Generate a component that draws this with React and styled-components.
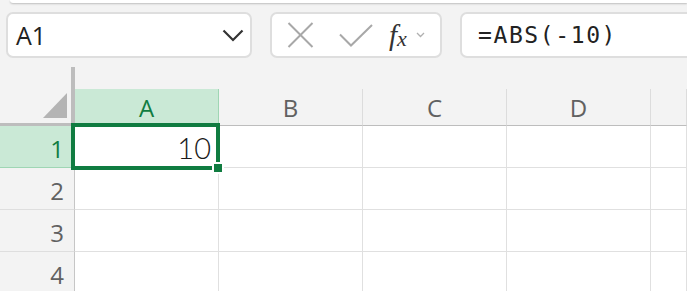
import React from 'react';
import styled, { createGlobalStyle } from 'styled-components';

const Global = createGlobalStyle`
  html, body { margin: 0; padding: 0; background: #f3f3f3; }
  body { font-family: "Open Sans", "Noto Sans", sans-serif; }
  * { box-sizing: border-box; }
`;

const Page = styled.div`
  width: 687px;
  height: 291px;
  overflow: hidden;
  background: #f3f3f3;
`;

const TopStrip = styled.div`
  height: 3px;
  margin-left: 10px;
  background: #fff;
  border-bottom-left-radius: 8px;
  box-shadow: 0 1px 2px rgba(0, 0, 0, 0.22);
`;

const Toolbar = styled.div`
  display: flex;
  gap: 18px;
  height: 55px;
  padding: 9px 0 0 6px;
`;

const Box = styled.div`
  flex-shrink: 0;
  height: 46px;
  background: #fff;
  border: 2px solid #dedede;
  border-radius: 7px;
  display: flex;
  align-items: center;
`;

const NameBox = styled(Box)`
  width: 246px;
  justify-content: space-between;
  padding: 0 6px 0 8px;
  font-size: 25px;
  color: #222;
`;

const FxBox = styled(Box)`
  width: 172px;
  padding-left: 15px;
`;

const FormulaBox = styled(Box)`
  width: 260px;
  padding-left: 16px;
  font-family: "DejaVu Sans Mono", monospace;
  font-size: 23px;
  letter-spacing: 1.6px;
  color: #222;
`;

const FxLabel = styled.span`
  font-family: "Liberation Serif", serif;
  font-style: italic;
  font-size: 29px;
  color: #333;
  margin-left: 16px;
  display: flex;
  align-items: flex-start;
  line-height: 1;
  sub {
    font-size: 22px;
    margin-left: 0;
    margin-top: 7px;
    vertical-align: baseline;
  }
`;

const IconGap = styled.span`
  display: flex;
  margin-left: ${p => p.$gap}px;
`;

const Sheet = styled.div`
  display: grid;
  grid-template-columns: 75px repeat(4, 144px) 1fr;
  grid-template-rows: 31px 37px repeat(4, 42px);
`;

const Corner = styled.div`
  grid-row: 1 / 3;
  padding-top: 9px;
  display: flex;
`;

const CornerBox = styled.div`
  flex: 1;
  border-right: 4px solid #bdbdbd;
  border-bottom: 3px solid #bdbdbd;
  display: flex;
  align-items: flex-end;
  justify-content: flex-end;
  padding: 0 4px 5px 0;
`;

const HeaderGap = styled.div`
  grid-column: 2 / -1;
`;

const ColHeader = styled.div`
  grid-row: 2;
  display: flex;
  align-items: center;
  justify-content: center;
  font-size: 24px;
  padding-top: 1px;
  color: ${p => (p.$active ? '#107c41' : '#616161')};
  background: ${p => (p.$active ? '#cae9d6' : '#f3f3f3')};
  border-right: 1px solid ${p => (p.$active ? '#9fd6b4' : '#dcdcdc')};
  border-bottom: 1px solid #bdbdbd;
`;

const RowHeader = styled.div`
  display: flex;
  align-items: center;
  justify-content: flex-end;
  padding: 3px 10px 0 0;
  font-size: 24px;
  color: ${p => (p.$active ? '#107c41' : '#616161')};
  background: ${p => (p.$active ? '#cae9d6' : '#f3f3f3')};
  border-right: 1px solid #c6c6c6;
  border-bottom: 1px solid ${p => (p.$active ? '#9fd6b4' : '#dedede')};
`;

const Cell = styled.div`
  position: relative;
  background: #fff;
  border-right: 1px solid #e0e0e0;
  border-bottom: 1px solid #e0e0e0;
  display: flex;
  align-items: center;
  justify-content: flex-end;
  padding: 2px 7px 0 0;
  font-family: "Lato", "Open Sans", sans-serif;
  font-weight: 300;
  font-size: 29px;
  color: #1a1a1a;
`;

const Selection = styled.div`
  position: absolute;
  z-index: 2;
  top: -3px;
  left: -4px;
  right: -2px;
  bottom: -3px;
  border: 4px solid #107c41;
  pointer-events: none;
`;

const FillHandle = styled.div`
  position: absolute;
  z-index: 3;
  right: -6px;
  bottom: -7px;
  width: 12px;
  height: 12px;
  background: #107c41;
  border: 2px solid #fff;
`;

const columns = ['A', 'B', 'C', 'D', ''];
const rows = [1, 2, 3, 4];

export default function App() {
  return (
    <Page>
      <Global />
      <TopStrip />
      <Toolbar>
        <NameBox>
          <span>A1</span>
          <svg width="22" height="13" viewBox="0 0 22 13">
            <polyline points="1.5,1.5 11,11 20.5,1.5" fill="none" stroke="#333" strokeWidth="2.2" />
          </svg>
        </NameBox>
        <FxBox>
          <svg width="27" height="26" viewBox="0 0 27 26">
            <line x1="1.5" y1="1" x2="25.5" y2="25" stroke="#a8a8a8" strokeWidth="2" />
            <line x1="25.5" y1="1" x2="1.5" y2="25" stroke="#a8a8a8" strokeWidth="2" />
          </svg>
          <IconGap $gap={25}>
            <svg width="34" height="23" viewBox="0 0 34 23">
              <polyline points="1,10.5 12,21.5 33,1" fill="none" stroke="#a8a8a8" strokeWidth="2" />
            </svg>
          </IconGap>
          <FxLabel>
            f<sub>x</sub>
          </FxLabel>
          <IconGap $gap={9}>
            <svg width="9" height="6" viewBox="0 0 9 6">
              <polyline points="1,1 4.5,4.5 8,1" fill="none" stroke="#b0b0b0" strokeWidth="1.3" />
            </svg>
          </IconGap>
        </FxBox>
        <FormulaBox>=ABS(-10)</FormulaBox>
      </Toolbar>
      <Sheet>
        <Corner>
          <CornerBox>
            <svg width="24" height="25" viewBox="0 0 24 25">
              <polygon points="0,25 24,25 24,0" fill="#b4b4b4" />
            </svg>
          </CornerBox>
        </Corner>
        <HeaderGap />
        {columns.map((c, i) => (
          <ColHeader key={i} $active={c === 'A'}>
            {c}
          </ColHeader>
        ))}
        {rows.map(r => (
          <React.Fragment key={r}>
            <RowHeader $active={r === 1}>{r}</RowHeader>
            {columns.map((c, i) => (
              <Cell key={i}>
                {r === 1 && c === 'A' && (
                  <>
                    10
                    <Selection />
                    <FillHandle />
                  </>
                )}
              </Cell>
            ))}
          </React.Fragment>
        ))}
      </Sheet>
    </Page>
  );
}
